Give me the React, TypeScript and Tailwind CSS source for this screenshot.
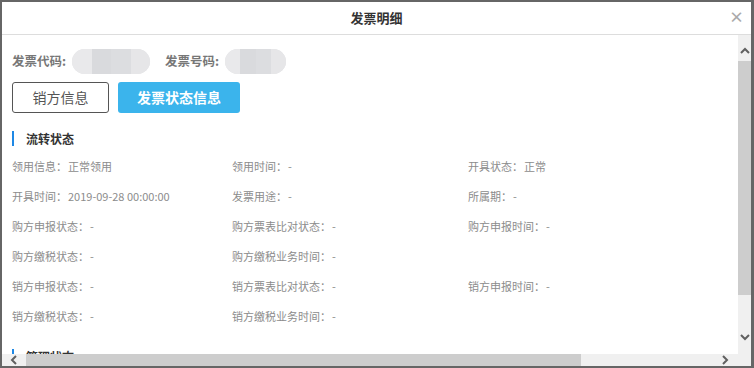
import React from 'react'

const font = { fontFamily: '"Microsoft YaHei", "Noto Sans CJK SC", "Noto Sans", sans-serif' }

const rows: [string, string][][] = [
  [['领用信息：', '正常领用'], ['领用时间：', '-'], ['开具状态：', '正常']],
  [['开具时间：', '2019-09-28 00:00:00'], ['发票用途：', '-'], ['所属期：', '-']],
  [['购方申报状态：', '-'], ['购方票表比对状态：', '-'], ['购方申报时间：', '-']],
  [['购方缴税状态：', '-'], ['购方缴税业务时间：', '-']],
  [['销方申报状态：', '-'], ['销方票表比对状态：', '-'], ['销方申报时间：', '-']],
  [['销方缴税状态：', '-'], ['销方缴税业务时间：', '-']],
]

const colW = ['w-[220px]', 'w-[236px]', 'w-[220px]']

function Chevron({ dir }: { dir: 'up' | 'down' | 'left' | 'right' }) {
  const d = {
    up: 'M1 6 L5 2 L9 6',
    down: 'M1 2 L5 6 L9 2',
    left: 'M6 1 L2 5 L6 9',
    right: 'M2 1 L6 5 L2 9',
  }[dir]
  const vertical = dir === 'up' || dir === 'down'
  return (
    <svg width={vertical ? 10 : 8} height={vertical ? 8 : 10} viewBox={vertical ? '0 0 10 8' : '0 0 8 10'}>
      <path d={d} fill="none" stroke="#606060" strokeWidth="2" />
    </svg>
  )
}

function Blur({ w }: { w: string }) {
  return (
    <div className={`${w} h-[25px] rounded-full bg-[#e2e3e6] flex overflow-hidden`}>
      <div className="flex-1 bg-[#e9e9eb]" />
      <div className="flex-1 bg-[#d9dadd]" />
      <div className="flex-1 bg-[#dcdde0]" />
      <div className="flex-1 bg-[#e6e6e8]" />
    </div>
  )
}

export default function App() {
  return (
    <div className="w-[754px] h-[368px] bg-[#666] pt-[2px] pl-[2px] pr-[3px] pb-[2px]" style={font}>
      <div className="w-full h-full bg-white flex flex-col">
        <div className="h-[33px] shrink-0 border-b border-[#dddddd] flex items-center justify-center relative">
          <span className="text-[13px] font-bold text-[#333]">发票明细</span>
          <span className="absolute right-[7px] top-[7px] text-[15px] font-bold text-[#aaa] leading-none">×</span>
        </div>
        <div className="flex flex-1 min-h-0">
          <div className="flex-1 flex flex-col min-w-0">
            <div className="flex-1 min-h-0 overflow-hidden pl-[10px] pt-[13px]">
              <div className="flex items-center h-[26px] text-[12.5px] font-bold text-[#777]">
                <span>发票代码:</span>
                <span className="ml-[6px]"><Blur w="w-[78px]" /></span>
                <span className="ml-[15px]">发票号码:</span>
                <span className="ml-[6px]"><Blur w="w-[61px]" /></span>
              </div>
              <div className="flex gap-[9px] mt-[8px]">
                <button className="w-[97px] h-[31px] border border-[#555] rounded-[3px] text-[14px] text-[#555] bg-white">
                  销方信息
                </button>
                <button className="w-[122px] h-[31px] rounded-[3px] text-[14px] font-bold text-white bg-[#3bb4ec]">
                  发票状态信息
                </button>
              </div>
              <div className="flex items-center mt-[18px] h-[15px]">
                <div className="w-[2px] h-[15px] bg-[#1e88e5]" />
                <span className="ml-[12px] text-[12px] font-bold text-[#333]">流转状态</span>
              </div>
              <div className="mt-[5px]">
                {rows.map((row, i) => (
                  <div key={i} className="flex h-[30px] items-center text-[11px] text-[#8c8c8c]">
                    {row.map(([k, v], j) => (
                      <div key={j} className={`${colW[j]} shrink-0 flex`}>
                        <span>{k}</span>
                        <span className="ml-[1px]">{v}</span>
                      </div>
                    ))}
                  </div>
                ))}
              </div>
              <div className="flex items-center mt-[18px] h-[15px]">
                <div className="w-[2px] h-[15px] bg-[#1e88e5]" />
                <span className="ml-[12px] text-[12px] font-bold text-[#333]">管理状态</span>
              </div>
            </div>
            <div className="h-[12px] shrink-0 bg-[#f0f0f0] flex items-center">
              <div className="w-[24px] flex justify-center"><Chevron dir="left" /></div>
              <div className="w-[555px] h-full bg-[#cdcdcd]" />
              <div className="flex-1" />
              <div className="w-[26px] flex justify-center"><Chevron dir="right" /></div>
            </div>
          </div>
          <div className="w-[13px] shrink-0 bg-[#f0f0f0] flex flex-col items-center">
            <div className="h-[26px] w-full flex items-end justify-center pb-[6px]"><Chevron dir="up" /></div>
            <div className="h-[234px] w-full bg-[#cdcdcd]" />
            <div className="flex-1 w-full flex items-end justify-center pb-[25px]"><Chevron dir="down" /></div>
          </div>
        </div>
      </div>
    </div>
  )
}
